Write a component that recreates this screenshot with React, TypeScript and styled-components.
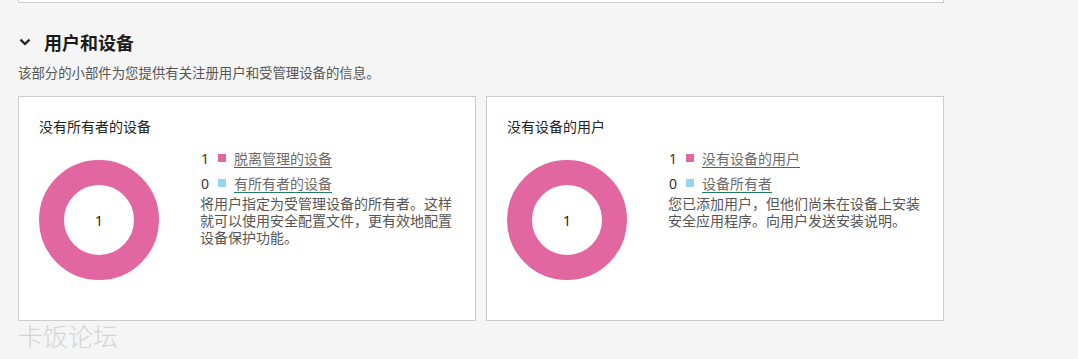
import React from "react"
import styled, { createGlobalStyle } from "styled-components"

const PINK = "#e2669f"
const BLUE = "#98d4f1"

const GlobalStyle = createGlobalStyle`
	html, body {
		margin: 0;
		padding: 0;
		background: #f5f5f5;
	}
	body {
		font-family: "Noto Sans", "Noto Sans CJK SC", sans-serif;
		color: #333;
	}
`

type Entry = {
	count: number
	color: string
	label: string
}

type CardData = {
	title: string
	total: number
	entries: Entry[]
	text: string
}

const cards: CardData[] = [
	{
		title: "没有所有者的设备",
		total: 1,
		entries: [
			{ count: 1, color: PINK, label: "脱离管理的设备" },
			{ count: 0, color: BLUE, label: "有所有者的设备" },
		],
		text: "将用户指定为受管理设备的所有者。这样就可以使用安全配置文件，更有效地配置设备保护功能。",
	},
	{
		title: "没有设备的用户",
		total: 1,
		entries: [
			{ count: 1, color: PINK, label: "没有设备的用户" },
			{ count: 0, color: BLUE, label: "设备所有者" },
		],
		text: "您已添加用户，但他们尚未在设备上安装安全应用程序。向用户发送安装说明。",
	},
]

function Donut({ value }: { value: number }) {
	return (
		<DonutWrap>
			<svg width="120" height="120" viewBox="0 0 120 120">
				<circle cx="60" cy="60" r="47.5" fill="none" stroke={PINK} strokeWidth="25" />
			</svg>
			<DonutValue>{value}</DonutValue>
		</DonutWrap>
	)
}

function Card({ data }: { data: CardData }) {
	return (
		<CardBox>
			<CardTitle>{data.title}</CardTitle>
			<CardBody>
				<Donut value={data.total} />
				<Info>
					{data.entries.map(e => (
						<LegendRow key={e.label}>
							<Count>{e.count}</Count>
							<Swatch color={e.color} />
							<LegendLink href="#" onClick={ev => ev.preventDefault()}>{e.label}</LegendLink>
						</LegendRow>
					))}
					<Description>{data.text}</Description>
				</Info>
			</CardBody>
		</CardBox>
	)
}

export default function App() {
	return <>
		<GlobalStyle />
		<Page>
			<TopPanel />
			<Heading>
				<svg width="12" height="12" viewBox="0 0 12 12">
					<path d="M1.5 3.6 L6 8 L10.5 3.6" fill="none" stroke="#222" strokeWidth="2.3" />
				</svg>
				<span>用户和设备</span>
			</Heading>
			<Subtitle>该部分的小部件为您提供有关注册用户和受管理设备的信息。</Subtitle>
			<Cards>
				{cards.map(c => <Card key={c.title} data={c} />)}
			</Cards>
			<Watermark>卡饭论坛</Watermark>
		</Page>
	</>
}

const Page = styled("div")`
	position: relative;
	width: 926px;
	margin-left: 18px;
	height: 359px;
`
const TopPanel = styled("div")`
	height: 3px;
	box-sizing: border-box;
	background: #fff;
	border: 1px solid #cccccc;
	border-top: none;
`
const Heading = styled("div")`
	display: flex;
	align-items: center;
	gap: 13px;
	margin-top: 27px;
	padding-left: 1px;
	height: 24px;
	font-size: 18px;
	font-weight: 700;
	color: #1a1a1a;
	font-family: "Noto Sans CJK SC", sans-serif;
`
const Subtitle = styled("div")`
	margin-top: 9px;
	line-height: 18px;
	font-size: 13.4px;
	color: #555;
	font-family: "Noto Sans CJK SC", sans-serif;
`
const Cards = styled("div")`
	display: grid;
	grid-template-columns: repeat(2, minmax(0, 1fr));
	gap: 10px;
	margin-top: 15px;
`
const CardBox = styled("div")`
	height: 225px;
	box-sizing: border-box;
	background: #fff;
	border: 1px solid #cccccc;
	padding: 20px 20px 0 20px;
`
const CardTitle = styled("div")`
	line-height: 18px;
	font-size: 14px;
	color: #222;
	font-family: "Noto Sans CJK SC", sans-serif;
`
const CardBody = styled("div")`
	display: flex;
	margin-top: 13px;
`
const DonutWrap = styled("div")`
	position: relative;
	flex: none;
	width: 120px;
	height: 120px;
	margin-top: 12px;
	svg { display: block; }
`
const DonutValue = styled("div")`
	position: absolute;
	inset: 0;
	display: flex;
	align-items: center;
	justify-content: center;
	font-size: 14px;
	color: #222;
`
const Info = styled("div")`
	flex: 1;
	min-width: 0;
	margin-left: 41px;
	font-size: 14px;
	font-family: "Noto Sans", "Noto Sans CJK SC", sans-serif;
`
const LegendRow = styled("div")`
	display: flex;
	align-items: center;
	height: 20px;
	& + & { margin-top: 5px; }
`
const Count = styled("span")`
	display: inline-block;
	width: 9px;
	text-align: right;
	color: #333;
`
const Swatch = styled("span")<{ color: string }>`
	display: inline-block;
	width: 8px;
	height: 8px;
	margin-left: 9px;
	margin-right: 8px;
	background: ${p => p.color};
`
const LegendLink = styled("a")`
	color: #6b6b6b;
	text-decoration: underline;
	text-decoration-color: #1f7a62;
	text-underline-offset: 3px;
	font-family: "Noto Sans CJK SC", sans-serif;
`
const Description = styled("div")`
	margin-top: 2px;
	line-height: 17px;
	color: #555;
	font-family: "Noto Sans CJK SC", sans-serif;
`
const Watermark = styled("div")`
	position: absolute;
	left: 0;
	top: 321px;
	font-size: 25px;
	line-height: 28px;
	color: #d4d4d4;
	font-family: "Noto Sans CJK SC", sans-serif;
	font-weight: 300;
	pointer-events: none;
`
